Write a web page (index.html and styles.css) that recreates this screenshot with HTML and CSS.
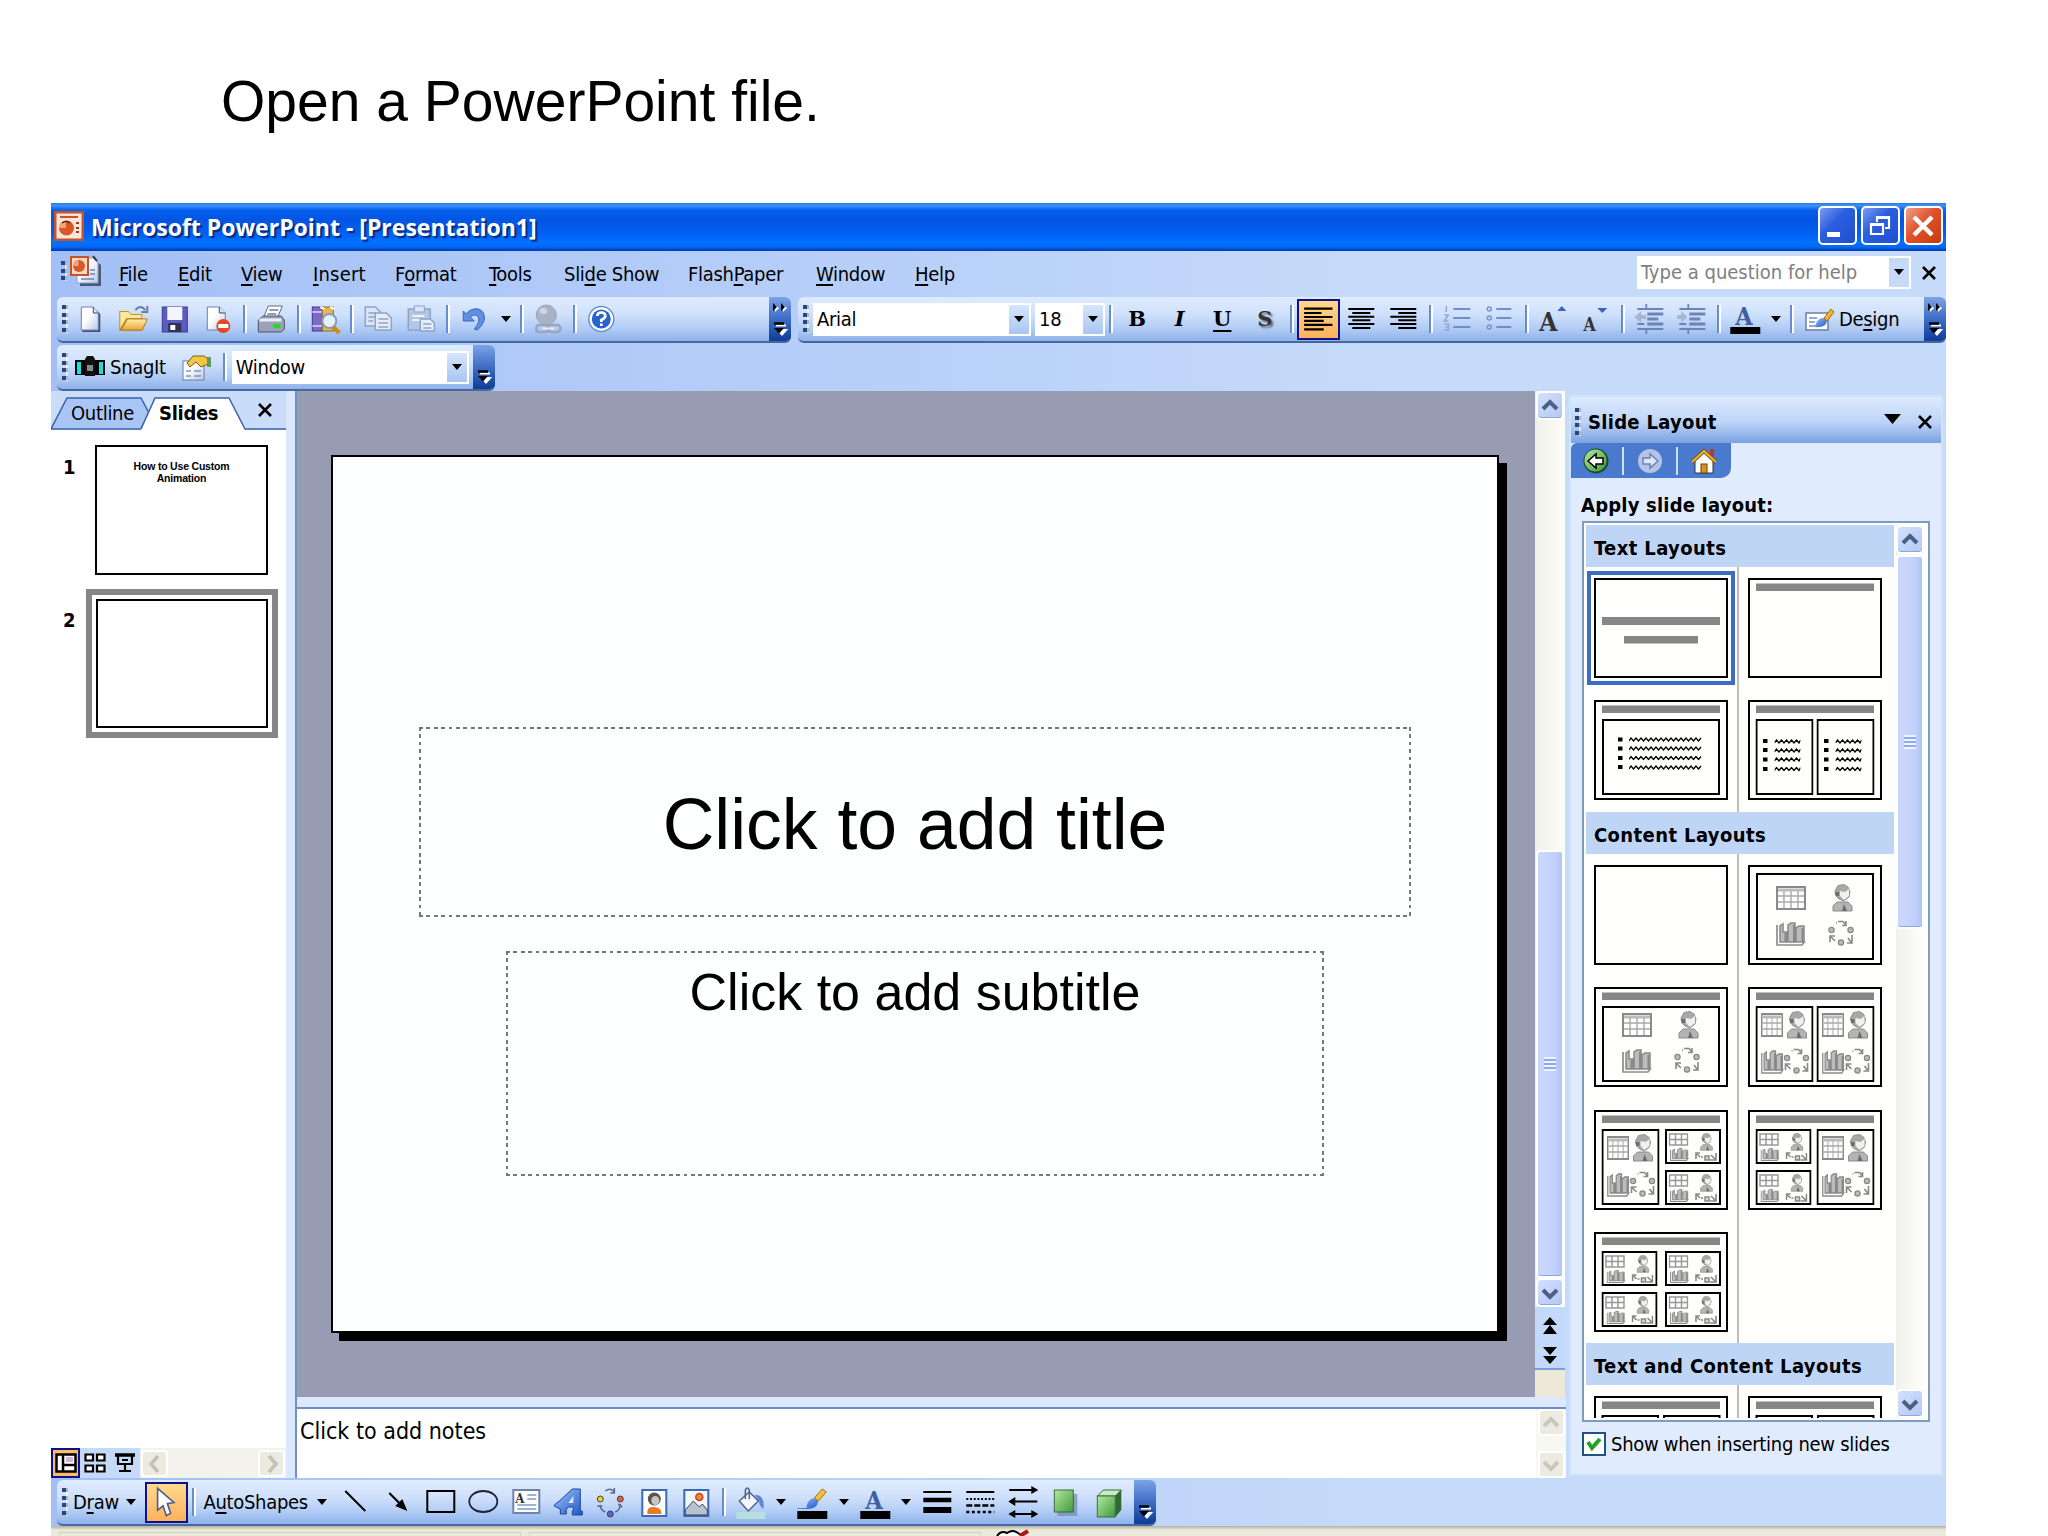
FILE: index.html
```html
<!DOCTYPE html>
<html lang="en">

<head>
    <meta charset="UTF-8">
    <title>Open a PowerPoint file</title>
    <link rel="stylesheet" href="styles.css">
</head>

<body>

<!-- Shared drawings -->
<svg class="defs" width="0" height="0">
    <defs>
        <linearGradient id="gGreen" x1="0" y1="0" x2="1" y2="1"><stop offset="0" stop-color="#b5e8a0"/><stop offset="1" stop-color="#3f9a3c"/></linearGradient>
        <linearGradient id="gBlue" x1="0" y1="0" x2="1" y2="1"><stop offset="0" stop-color="#9cc6fb"/><stop offset="1" stop-color="#1e55c8"/></linearGradient>
        <linearGradient id="gPaper" x1="0" y1="0" x2="1" y2="1"><stop offset="0.4" stop-color="#fff"/><stop offset="1" stop-color="#b9c8e6"/></linearGradient>
        <linearGradient id="gGold" x1="0" y1="0" x2="0" y2="1"><stop offset="0" stop-color="#fff0a8"/><stop offset="1" stop-color="#e8a83a"/></linearGradient>

        <symbol id="table" viewBox="0 0 30 24" preserveAspectRatio="none">
            <rect x="1" y="1" width="28" height="22" fill="#fff" stroke="#8a8a8a" stroke-width="2"/>
            <path d="M2 4H28" stroke="#bbb" stroke-width="3"/>
            <path d="M2 10H28M2 16H28M8 5V22M15 5V22M22 5V22" stroke="#a9a9a9" stroke-width="1.4"/>
        </symbol>
        <symbol id="miniTable" viewBox="0 0 20 13" preserveAspectRatio="none">
            <path d="M1 1H19V12H1ZM1 6.500H19M7 1V12M13 1V12" fill="#fff" stroke="#999" stroke-width="1.500"/>
        </symbol>
        <symbol id="person" viewBox="0 0 21 28" preserveAspectRatio="none">
            <path d="M1 27V22L5 18H16L20 22V27Z" fill="#b4b4b4" stroke="#8c8c8c"/>
            <path d="M12 20L15 27H10Z" fill="#6c6c6c"/>
            <path d="M3 7L6 1.500L12 0.500L16 3L18 8L17 13L12 17L7 15L4 12Z" fill="#a8a8a8" stroke="#909090"/>
            <path d="M8 7L13 8L17 5L17 12L12 16L8 12Z" fill="#f0f0f0"/>
            <path d="M3 8H7V12H4Z" fill="#6c6c6c"/>
        </symbol>
        <symbol id="chart" viewBox="0 0 30 24" preserveAspectRatio="none">
            <path d="M1 3V23H26L29 19" fill="none" stroke="#8c8c8c" stroke-width="1.700"/>
            <path d="M4 20V4L7 2V10H11V20ZM12 20V3L15 1H19V20ZM20 20V6L23 4H28V20Z" fill="#bcbcbc" stroke="#888" stroke-width="1.500"/>
            <path d="M9.500 11V20M18 3V20M26.500 6V20" stroke="#888" stroke-width="2"/>
        </symbol>
        <symbol id="cycle" viewBox="0 0 26 26">
            <path d="M8 3H9M10 1.500H15L18 5M18 1V5.500H14M2 22V16H7M3 17L7 21M24 15V23H19M23 22L20 18" fill="none" stroke="#888" stroke-width="1.600"/>
            <circle cx="3.500" cy="10" r="2.600" fill="#bbb" stroke="#888" stroke-width="1.300"/>
            <circle cx="22.500" cy="10" r="2.600" fill="#bbb" stroke="#888" stroke-width="1.300"/>
            <circle cx="13" cy="22.500" r="2.600" fill="#bbb" stroke="#888" stroke-width="1.300"/>
        </symbol>
        <symbol id="miniCycle" viewBox="0 0 22 9">
            <path d="M1 7V1H5M2 2L5 5M6 5H8M21 1V8H15M20 7L16 3" fill="none" stroke="#888" stroke-width="1.600"/>
            <rect x="10" y="4" width="4" height="4" fill="#ddd" stroke="#888" stroke-width="1.500"/>
        </symbol>

        <!-- Building blocks of the layout previews -->
        <symbol id="frame" viewBox="0 0 134 100">
            <rect x="1" y="1" width="132" height="98" fill="#fefffc" stroke="#000" stroke-width="2"/>
        </symbol>
        <symbol id="titled" viewBox="0 0 134 100">
            <use href="#frame"/><rect x="8" y="5.500" width="118" height="7.500" fill="#868686"/>
        </symbol>
        <symbol id="half" viewBox="0 0 58 76">
            <rect x="1" y="1" width="56" height="74" fill="#fefffc" stroke="#000" stroke-width="2"/>
            <use href="#table" x="5.500" y="7" width="22" height="24"/>
            <use href="#person" x="31" y="5" width="21" height="28"/>
            <use href="#chart" x="5.500" y="44" width="23" height="24"/>
            <use href="#cycle" x="28" y="42" width="26" height="26"/>
        </symbol>
        <symbol id="mini" viewBox="0 0 56 35">
            <rect x="1" y="1" width="54" height="33" fill="#fefffc" stroke="#000" stroke-width="2"/>
            <use href="#miniTable" x="3.500" y="4" width="20" height="13"/>
            <use href="#person" x="35" y="4" width="13" height="18"/>
            <use href="#chart" x="5" y="19" width="19" height="13"/>
            <use href="#miniCycle" x="30" y="23" width="22" height="9"/>
        </symbol>
        <symbol id="four" viewBox="0 0 78 64">
            <use href="#table" x="0" y="2" width="30" height="24"/>
            <use href="#person" x="56" y="0" width="21" height="28"/>
            <use href="#chart" x="0" y="38" width="30" height="24"/>
            <use href="#cycle" x="52" y="36" width="26" height="26"/>
        </symbol>
        <symbol id="wave" viewBox="0 0 74 5">
            <path d="M0 4L2 1L4.500 4L7 1L9.500 4L12 1L14.500 4L17 1L19.500 4L22 1L24.500 4L27 1L29.500 4L32 1L34.500 4L37 1L39.500 4L42 1L44.500 4L47 1L49.500 4L52 1L54.500 4L57 1L59.500 4L62 1L64.500 4L67 1L69.500 4L72 1" fill="none" stroke="#000" stroke-width="1.300"/>
        </symbol>
        <symbol id="waveShort" viewBox="0 0 26 5">
            <path d="M0 4L2 1L4.500 4L7 1L9.500 4L12 1L14.500 4L17 1L19.500 4L22 1L24.500 4L26 1" fill="none" stroke="#000" stroke-width="1.300"/>
        </symbol>
        <symbol id="bulletHalf" viewBox="0 0 58 76">
            <rect x="1" y="1" width="56" height="74" fill="#fefffc" stroke="#000" stroke-width="2"/>
            <path d="M7.500 22H12M7.500 31H12M7.500 40.500H12M7.500 50H12" stroke="#000" stroke-width="4"/>
            <use href="#waveShort" x="19" y="20" width="26" height="5"/><use href="#waveShort" x="19" y="29" width="26" height="5"/>
            <use href="#waveShort" x="19" y="38" width="26" height="5"/><use href="#waveShort" x="19" y="47.500" width="26" height="5"/>
        </symbol>

        <symbol id="up" viewBox="0 0 24 26"><path d="M5 16L12 9L19 16" fill="none" stroke="#4d6185" stroke-width="4"/></symbol>
        <symbol id="down" viewBox="0 0 24 26"><path d="M5 10L12 17L19 10" fill="none" stroke="#4d6185" stroke-width="4"/></symbol>
        <symbol id="cross" viewBox="0 0 16 16"><path d="M2 2L14 14M14 2L2 14" stroke="#000" stroke-width="2.600"/></symbol>
        <symbol id="arrow" viewBox="0 0 10 6"><path d="M0 0H10L5 6Z"/></symbol>
        <symbol id="more" viewBox="0 0 18 14">
            <path d="M5 3.500H15M7 8H15L11 12.500Z" stroke="#fff" stroke-width="2" fill="#fff"/>
            <path d="M3 1.500H13" stroke="#000" stroke-width="2.500"/><path d="M3 6H13L8 11.500Z"/>
        </symbol>
        <symbol id="more2" viewBox="0 0 18 10">
            <path d="M4 2L8 5L4 9ZM12 2L16 5L12 9Z" fill="#fff"/><path d="M2 0L6 4L2 8ZM10 0L14 4L10 8Z"/>
        </symbol>
        <symbol id="ppt" viewBox="0 0 30 30">
            <rect x="1" y="1" width="28" height="28" fill="#fde6d8" stroke="#c4532a" stroke-width="3"/>
            <path d="M6 6H24" stroke="#c4532a" stroke-width="2"/>
            <circle cx="12.500" cy="17" r="7.500" fill="#d8582a"/><path d="M12 17V9.500A7.500 7.500 0 0 0 5 17Z" fill="#f4a379"/>
            <path d="M8 12Q12 9 16 12" stroke="#5a2410" stroke-width="1.500" fill="none"/>
            <path d="M22 12H25M22 17H25M22 21H25" stroke="#a03c18" stroke-width="2"/>
        </symbol>
    </defs>
</svg>

<h1 class="caption">Open a PowerPoint file.</h1>

<main class="app">

    <header class="titlebar">
        <svg class="app-icon" width="30" height="30"><use href="#ppt"/></svg>
        <span class="title-text">Microsoft PowerPoint - [Presentation1]</span>
        <div class="win-buttons">
            <div class="win-btn"><svg width="36" height="36"><rect x="7" y="24" width="13" height="5" fill="#fff"/></svg></div>
            <div class="win-btn"><svg width="36" height="36"><path d="M14 14V9H26V20H22M13 10H26" fill="none" stroke="#fff" stroke-width="2.200"/><path d="M8 16H20V26H8ZM8 17H20" fill="none" stroke="#fff" stroke-width="2.200"/></svg></div>
            <div class="win-btn close"><svg width="36" height="36"><path d="M8 9L26 27M26 9L8 27" stroke="#fff" stroke-width="4.500"/></svg></div>
        </div>
    </header>

    <nav class="menubar">
        <span class="grip short"></span>
        <svg class="doc-icon" width="32" height="32">
            <path d="M10 6H26L31 10V31H10Z" fill="#4a5a78"/><path d="M7 3H23L28 8V28H7Z" fill="url(#gPaper)" stroke="#8aa0c8"/>
            <path d="M20 15H25M20 19H25M11 24H24" stroke="#6a86c0" stroke-width="1.500"/><path d="M23 1L27 6" stroke="#334" stroke-width="2"/>
            <rect x="1" y="2" width="17" height="18" fill="#fbd9c6" stroke="#c4532a" stroke-width="2"/>
            <circle cx="9" cy="11" r="6" fill="#d8582a"/><path d="M8.500 11V5A6 6 0 0 0 3 11Z" fill="#f4a379"/>
        </svg>
        <span class="menu m-file"><u>F</u>ile</span>
        <span class="menu m-edit"><u>E</u>dit</span>
        <span class="menu m-view"><u>V</u>iew</span>
        <span class="menu m-insert"><u>I</u>nsert</span>
        <span class="menu m-format">F<u>o</u>rmat</span>
        <span class="menu m-tools"><u>T</u>ools</span>
        <span class="menu m-show">Sli<u>d</u>e Show</span>
        <span class="menu m-flash">Flash<u>P</u>aper</span>
        <span class="menu m-window"><u>W</u>indow</span>
        <span class="menu"><u>H</u>elp</span>
        <div class="combo ask"><span>Type a question for help</span><i class="drop"><svg width="10" height="6"><use href="#arrow"/></svg></i></div>
        <svg class="menu-close" width="16" height="16"><use href="#cross"/></svg>
    </nav>

    <div class="toolbar-row">
        <!-- Standard toolbar -->
        <div class="toolbar standard">
            <span class="grip"></span>
            <svg class="icon" viewBox="0 0 34 34"><path d="M9 6H21L27 12V30H9Z" fill="#45557a"/><path d="M8 5H20L25 11V28H8Z" fill="url(#gPaper)" stroke="#6c82ad"/><path d="M20 5V11H25" fill="#dce6f8" stroke="#334a70"/></svg>
            <svg class="icon" viewBox="0 0 34 34"><path d="M3 29V9H12L15 12H26V17H31L26 29Z" fill="#c88d25"/><path d="M4 26V10H12L15 13H25V16H10Z" fill="#fbe9a0"/><path d="M5 28L11 17H31L26 28Z" fill="url(#gGold)" stroke="#b9812a"/><path d="M19 8Q24 2 29 8M31 4V10H25" fill="none" stroke="#6b7f9c" stroke-width="2"/></svg>
            <svg class="icon" viewBox="0 0 34 34"><rect x="4" y="5" width="25" height="25" fill="#5d5cc0" stroke="#3b3b90"/><rect x="9" y="5" width="15" height="13" fill="#f4f6ff"/><rect x="10" y="21" width="13" height="9" fill="#2c3350"/><rect x="12" y="23" width="5" height="5" fill="#fff"/></svg>
            <svg class="icon" viewBox="0 0 34 34"><path d="M6 5H18L24 11V28H6Z" fill="url(#gPaper)" stroke="#6c82ad"/><path d="M18 5V11H24" fill="#dce6f8" stroke="#334a70"/><circle cx="22" cy="24" r="7" fill="#e04a26"/><rect x="17" y="22" width="10" height="4" fill="#fff"/></svg>
            <i class="sep"></i>
            <svg class="icon" viewBox="0 0 34 34"><path d="M9 16L14 4H28L23 16Z" fill="#fff" stroke="#5c6a86"/><path d="M15 8H24M13 12H22" stroke="#6d7c99" stroke-width="1.500"/><path d="M4 18L9 14H27L30 18V27L27 30H4Z" fill="#9aa3b5" stroke="#49546c"/><path d="M5 18H27" stroke="#eef" stroke-width="3"/><rect x="19" y="22" width="7" height="4" fill="#1fe01f"/></svg>
            <i class="sep"></i>
            <svg class="icon" viewBox="0 0 34 34"><rect x="4" y="5" width="10" height="24" fill="#7c6cc8" stroke="#43368c"/><path d="M4 10H14M4 24H14" stroke="#c9b8ff" stroke-width="2"/><rect x="14" y="5" width="11" height="24" fill="#e3b858" stroke="#8a6a20"/><path d="M12 5L16 7M22 5L26 7" stroke="#fff" stroke-width="2"/><circle cx="21" cy="19" r="7" fill="#e4f3fb" stroke="#8a9cb5" stroke-width="2"/><path d="M25 25L31 31" stroke="#c98c1c" stroke-width="4"/></svg>
            <i class="sep"></i>
            <svg class="icon" viewBox="0 0 34 34"><path d="M4 5H14L19 10V24H4Z" fill="#dbe5f6" stroke="#8fa4c8" stroke-width="1.500"/><path d="M7 11H14M7 15H14M7 19H12" stroke="#8fa4c8" stroke-width="1.500"/><path d="M14 11H25L30 16V28H14Z" fill="#e6edf9" stroke="#8fa4c8" stroke-width="1.500"/><path d="M17 17H27M17 21H27M17 25H27" stroke="#8fa4c8" stroke-width="1.500"/></svg>
            <svg class="icon" viewBox="0 0 34 34"><rect x="4" y="7" width="22" height="21" fill="#b4c6e4" stroke="#8ea3c8" stroke-width="1.500"/><rect x="10" y="4" width="10" height="6" fill="#dbe5f6" stroke="#8ea3c8"/><path d="M8 14H20M8 18H16" stroke="#edf3fc" stroke-width="2"/><path d="M16 17H26L30 21V29H16Z" fill="#e6edf9" stroke="#8ea3c8" stroke-width="1.500"/><path d="M19 22H27M19 26H27" stroke="#8ea3c8" stroke-width="1.500"/></svg>
            <i class="sep"></i>
            <svg class="icon" viewBox="0 0 34 34"><path d="M9 12Q13 6 21 7Q28 9 27 18Q25 24 20 28L17 27Q23 20 21 15Q18 11 13 15L17 19H6V9Z" fill="#5f8fe0" stroke="#3c66ba"/></svg>
            <i class="dd"><svg width="10" height="6"><use href="#arrow"/></svg></i>
            <i class="sep"></i>
            <svg class="icon" viewBox="0 0 34 34"><circle cx="16" cy="13" r="10" fill="#a9b3c6" stroke="#98a3b9"/><ellipse cx="13" cy="9" rx="4" ry="3" fill="#cdd5e2"/><rect x="6" y="23" width="12" height="7" rx="3" fill="none" stroke="#9aa6bb" stroke-width="2.500"/><rect x="18" y="23" width="12" height="7" rx="3" fill="none" stroke="#9aa6bb" stroke-width="2.500"/><path d="M12 26.500H24" stroke="#e8ecf4" stroke-width="2"/></svg>
            <i class="sep"></i>
            <svg class="icon" viewBox="0 0 34 34"><circle cx="17" cy="17" r="12.500" fill="#fff" stroke="#6d93cc" stroke-width="1.500"/><circle cx="17" cy="17" r="9.500" fill="#2763cf"/><path d="M13 14Q13 10.500 17 10.500T21 14Q21 16 17 18V20M17 21.500V24" fill="none" stroke="#fff" stroke-width="2.700"/></svg>
            <span class="chevron"><svg width="18" height="10"><use href="#more2"/></svg><svg width="18" height="14"><use href="#more"/></svg></span>
        </div>

        <!-- Formatting toolbar -->
        <div class="toolbar formatting">
            <span class="grip"></span>
            <div class="combo font"><span>Arial</span><i class="drop"><svg width="10" height="6"><use href="#arrow"/></svg></i></div>
            <div class="combo size"><span>18</span><i class="drop"><svg width="10" height="6"><use href="#arrow"/></svg></i></div>
            <i class="sep"></i>
            <b class="icon glyph">B</b>
            <b class="icon glyph italic">I</b>
            <b class="icon glyph underline">U</b>
            <b class="icon glyph shadow">S</b>
            <i class="sep"></i>
            <svg class="icon on" viewBox="0 0 34 34"><path d="M4 7H30M4 11H20M4 14.700H30M4 18.300H22M4 22H30M4 26H22" stroke="#000" stroke-width="2"/></svg>
            <svg class="icon" viewBox="0 0 34 34"><path d="M4 7H30M8 11H26M4 14.700H30M8 18.300H26M4 22H30M8 26H26" stroke="#000" stroke-width="2"/></svg>
            <svg class="icon" viewBox="0 0 34 34"><path d="M4 7H30M12 11H30M4 14.700H30M12 18.300H30M4 22H30M12 26H30" stroke="#000" stroke-width="2"/></svg>
            <i class="sep"></i>
            <svg class="icon" viewBox="0 0 34 34"><path d="M13 7H30M13 16H30M13 25H30" stroke="#6f8fc8" stroke-width="2"/><path d="M6 4V10M4 13H8L4 19H8M4 22H8V28H4M5 25H8" fill="none" stroke="#93a8cf" stroke-width="1.500"/></svg>
            <svg class="icon" viewBox="0 0 34 34"><path d="M14 7H29M14 16H29M14 25H29" stroke="#6f8fc8" stroke-width="2"/><circle cx="7" cy="7" r="2" fill="none" stroke="#7d95c2" stroke-width="1.500"/><circle cx="7" cy="16" r="2" fill="none" stroke="#7d95c2" stroke-width="1.500"/><circle cx="7" cy="25" r="2" fill="none" stroke="#7d95c2" stroke-width="1.500"/></svg>
            <i class="sep"></i>
            <svg class="icon" viewBox="0 0 34 34"><text x="3" y="29" class="svg-letter big">A</text><path d="M21 9L25.500 4L30 9Z" fill="#3d64b4"/></svg>
            <svg class="icon" viewBox="0 0 34 34"><text x="5" y="29" class="svg-letter small">A</text><path d="M19 6H29L24 11Z" fill="#3d64b4"/></svg>
            <i class="sep"></i>
            <svg class="icon" viewBox="0 0 34 34"><path d="M5 7H31M5 27H31M14 2V6M14 28V32M5 22H12" stroke="#6d85b4" stroke-width="1.800"/><path d="M15 12H31M15 17H26M15 22H31" stroke="#6d85b4" stroke-width="2.800"/><path d="M2 15L9 9V13H14V17H9V21Z" fill="#a6b6d2"/></svg>
            <svg class="icon" viewBox="0 0 34 34"><path d="M5 7H31M5 27H31M14 2V6M14 28V32M5 22H12" stroke="#6d85b4" stroke-width="1.800"/><path d="M15 12H31M15 17H26M15 22H31" stroke="#6d85b4" stroke-width="2.800"/><path d="M13 15L7 9V13H3V17H7V21Z" fill="#a6b6d2"/></svg>
            <i class="sep"></i>
            <svg class="icon" viewBox="0 0 34 34"><text x="7" y="23" class="svg-letter blue">A</text><rect x="2" y="25" width="30" height="7"/></svg>
            <i class="dd"><svg width="10" height="6"><use href="#arrow"/></svg></i>
            <i class="sep"></i>
            <svg class="design-icon" width="32" height="28"><rect x="1" y="8" width="22" height="17" fill="#fff" stroke="#6a7da5" stroke-width="1.500"/><path d="M4 13H12M4 17H10M4 21H14" stroke="#93a9d8" stroke-width="2"/><path d="M10 22Q12 12 19 13L22 16Q21 23 10 22Z" fill="url(#gBlue)"/><path d="M19 13L26 4L29 7L22 16Z" fill="#f4b62c" stroke="#a56a14"/></svg>
            <span class="design-label">De<u>s</u>ign</span>
            <span class="chevron"><svg width="18" height="10"><use href="#more2"/></svg><svg width="18" height="14"><use href="#more"/></svg></span>
        </div>
    </div>

    <div class="toolbar-row second-row">
        <div class="toolbar snagit">
            <span class="grip"></span>
            <svg class="snag-icon" width="30" height="22"><rect x="0" y="4" width="30" height="15" fill="#000"/><rect x="2" y="6" width="4" height="12" fill="#18e0e0"/><rect x="24" y="6" width="4" height="12" fill="#18e0e0"/><path d="M10 3L12 0H18L20 3V20H10Z" fill="#111"/><rect x="12" y="9" width="6" height="6" fill="#888"/></svg>
            <span class="snag-label">SnagIt</span>
            <svg class="prop-icon" width="30" height="28"><rect x="1" y="8" width="21" height="19" fill="url(#gPaper)" stroke="#6a7da5"/><path d="M4 18H9M12 18H19M4 23H9M12 23H19" stroke="#7d95c2" stroke-width="1.500"/><path d="M5 10L11 3H22L26 6V11L19 14L14 9L8 14Z" fill="#f3c744" stroke="#7d5c14"/><rect x="25" y="4" width="4" height="10" fill="#5a9a5a"/></svg>
            <i class="sep"></i>
            <div class="combo profile"><span>Window</span><i class="drop"><svg width="10" height="6"><use href="#arrow"/></svg></i></div>
            <span class="chevron"><svg width="18" height="14"><use href="#more"/></svg></span>
        </div>
    </div>

    <section class="workspace">

        <!-- Outline / Slides pane -->
        <aside class="left-pane">
            <div class="tabs">
                <svg class="tab-shapes" width="235" height="40">
                    <path d="M0 38L16 7H90L98 22L90 38Z" fill="#a9c5f6" stroke="#3b62a8" stroke-width="1.500"/>
                    <path d="M90 38L104 7H178L194 38V40H90Z" fill="#fff"/><path d="M90 38L104 7H178L194 38H235" fill="none" stroke="#3b62a8" stroke-width="1.500"/>
                    <rect x="0" y="39" width="235" height="1" fill="#fff"/>
                </svg>
                <span class="tab-outline">Outline</span>
                <span class="tab-slides">Slides</span>
                <svg class="tab-close" width="16" height="16"><use href="#cross"/></svg>
            </div>
            <div class="thumb-row">
                <b>1</b>
                <div class="thumb"><p>How to Use Custom<br>Animation</p></div>
            </div>
            <div class="thumb-row second">
                <b>2</b>
                <div class="thumb-selected"><div class="thumb"></div></div>
            </div>
            <div class="view-bar">
                <span class="view on"><svg width="22" height="20"><path d="M1.500 1.500H20.500V18.500H1.500ZM8 1V19M8 12H20" fill="#fff" stroke="#000" stroke-width="2.500"/><rect x="11" y="4" width="7" height="5" fill="#cbb8dc"/></svg></span>
                <span class="view"><svg width="22" height="20"><path d="M1.500 1.500H9V7.500H1.500ZM13 1.500H20.500V7.500H13ZM1.500 12.500H9V18.500H1.500ZM13 12.500H20.500V18.500H13Z" fill="#fff" stroke="#000" stroke-width="2.200"/></svg></span>
                <span class="view"><svg width="22" height="20"><path d="M1 2H21" stroke="#000" stroke-width="3.500"/><path d="M4 3V11H18V3M8 7H14M11 12V18M5 18H17" fill="none" stroke="#000" stroke-width="2.200"/></svg></span>
                <div class="hscroll">
                    <span class="dis-btn"><svg width="24" height="26"><path d="M15 5L8 13L15 21" fill="none" stroke="#c2c1b4" stroke-width="3.500"/></svg></span>
                    <span class="dis-btn"><svg width="24" height="26"><path d="M9 5L16 13L9 21" fill="none" stroke="#c2c1b4" stroke-width="3.500"/></svg></span>
                </div>
            </div>
        </aside>

        <!-- Slide and notes -->
        <div class="center">
            <div class="stage">
                <div class="canvas">
                    <div class="slide">
                        <div class="placeholder ph-title">Click to add title</div>
                        <div class="placeholder ph-sub">Click to add subtitle</div>
                    </div>
                </div>
                <div class="vscroll">
                    <span class="sb-btn"><svg width="24" height="26"><use href="#up"/></svg></span>
                    <span class="sb-space"></span>
                    <span class="sb-thumb"><i></i></span>
                    <span class="sb-btn"><svg width="24" height="26"><use href="#down"/></svg></span>
                    <span class="jump">
                        <svg width="16" height="48"><path d="M8 0L15 8H1ZM8 8L15 17H1ZM1 30H15L8 38ZM1 39H15L8 47Z"/></svg>
                    </span>
                    <span class="corner"></span>
                </div>
            </div>
            <div class="notes">
                <span class="notes-text">Click to add notes</span>
                <div class="notes-scroll">
                    <span class="dis-btn"><svg width="24" height="26"><path d="M5 16L12 9L19 16" fill="none" stroke="#c9c8ba" stroke-width="4"/></svg></span>
                    <span class="dis-btn"><svg width="24" height="26"><path d="M5 10L12 17L19 10" fill="none" stroke="#c9c8ba" stroke-width="4"/></svg></span>
                </div>
            </div>
        </div>

        <!-- Task pane -->
        <aside class="task-pane">
            <div class="task-head">
                <span class="grip"></span>
                <b>Slide Layout</b>
                <svg class="task-drop" width="17" height="10"><path d="M0 0H17L8.500 10Z"/></svg>
                <svg width="16" height="16"><use href="#cross"/></svg>
            </div>
            <div class="task-nav">
                <svg width="26" height="26"><circle cx="13" cy="13" r="12.500" fill="#1c4a2a"/><circle cx="12.500" cy="12.500" r="11" fill="url(#gGreen)"/><path d="M5 13L13 6V10H20V16H13V20Z" fill="#fff" stroke="#000" stroke-width="1.500"/></svg>
                <i></i>
                <svg width="26" height="26"><circle cx="13" cy="13" r="12" fill="#b5c3e4"/><path d="M21 13L13 6V10H6V16H13V20Z" fill="#dfe6f6" stroke="#6882ba" stroke-width="1.500"/></svg>
                <i></i>
                <svg width="26" height="26"><rect x="19" y="1" width="4" height="10" fill="#b5382a"/><path d="M4 13L13 4L22 13V25H4Z" fill="#fff" stroke="#333"/><path d="M1 14L13 3L25 14" fill="none" stroke="#7d5710" stroke-width="4"/><path d="M1 14L13 3L25 14" fill="none" stroke="#f2b43a" stroke-width="2"/><rect x="10" y="16" width="6" height="9" fill="#d98f1a" stroke="#6a430a"/></svg>
            </div>
            <b class="task-label">Apply slide layout:</b>
            <div class="layout-box">
                <div class="layout-list">
                    <h2>Text Layouts</h2>
                    <div class="grid two-rows">
                        <svg class="card selected" viewBox="0 0 134 100"><use href="#frame"/><rect x="8" y="39" width="118" height="8" fill="#868686"/><rect x="30" y="58" width="74" height="7.500" fill="#868686"/></svg>
                        <svg class="card" viewBox="0 0 134 100"><use href="#titled"/></svg>
                        <svg class="card" viewBox="0 0 134 100"><use href="#titled"/><rect x="9" y="20" width="116" height="74" fill="none" stroke="#000" stroke-width="2"/>
                            <path d="M24 39.500H28.500M24 48.500H28.500M24 58H28.500M24 67H28.500" stroke="#000" stroke-width="4"/>
                            <use href="#wave" x="35" y="37" width="74" height="5"/><use href="#wave" x="35" y="46" width="74" height="5"/><use href="#wave" x="35" y="55.500" width="74" height="5"/><use href="#wave" x="35" y="65" width="74" height="5"/></svg>
                        <svg class="card" viewBox="0 0 134 100"><use href="#titled"/><use href="#bulletHalf" x="7.500" y="19" width="58" height="76"/><use href="#bulletHalf" x="68.500" y="19" width="58" height="76"/></svg>
                    </div>
                    <h2>Content Layouts</h2>
                    <div class="grid four-rows">
                        <svg class="card" viewBox="0 0 134 100"><use href="#frame"/></svg>
                        <svg class="card" viewBox="0 0 134 100"><use href="#frame"/><rect x="9" y="9" width="116" height="85" fill="none" stroke="#000" stroke-width="2"/><use href="#four" x="28" y="19" width="78" height="64"/></svg>
                        <svg class="card" viewBox="0 0 134 100"><use href="#titled"/><rect x="9" y="20" width="116" height="74" fill="none" stroke="#000" stroke-width="2"/><use href="#four" x="28" y="24" width="78" height="64"/></svg>
                        <svg class="card" viewBox="0 0 134 100"><use href="#titled"/><use href="#half" x="7.500" y="19" width="58" height="76"/><use href="#half" x="68.500" y="19" width="58" height="76"/></svg>
                        <svg class="card" viewBox="0 0 134 100"><use href="#titled"/><use href="#half" x="7.500" y="19" width="58" height="76"/><use href="#mini" x="71" y="19" width="56" height="35"/><use href="#mini" x="71" y="60" width="56" height="35"/></svg>
                        <svg class="card" viewBox="0 0 134 100"><use href="#titled"/><use href="#mini" x="7.500" y="19" width="56" height="35"/><use href="#mini" x="7.500" y="60" width="56" height="35"/><use href="#half" x="68.500" y="19" width="58" height="76"/></svg>
                        <svg class="card" viewBox="0 0 134 100"><use href="#titled"/><use href="#mini" x="7.500" y="19" width="56" height="35"/><use href="#mini" x="7.500" y="60" width="56" height="35"/><use href="#mini" x="71" y="19" width="56" height="35"/><use href="#mini" x="71" y="60" width="56" height="35"/></svg>
                    </div>
                    <h2>Text and Content Layouts</h2>
                    <div class="grid last">
                        <svg class="card" viewBox="0 0 134 100"><use href="#titled"/><path d="M8.500 94V20H64V94M70 94V20H125.500V94" fill="none" stroke="#000" stroke-width="2"/></svg>
                        <svg class="card" viewBox="0 0 134 100"><use href="#titled"/><path d="M8.500 94V20H64V94M70 94V20H125.500V94" fill="none" stroke="#000" stroke-width="2"/></svg>
                    </div>
                </div>
                <div class="list-scroll">
                    <span class="sb-btn"><svg width="24" height="26"><use href="#up"/></svg></span>
                    <span class="sb-thumb"><i></i></span>
                    <span class="sb-space"></span>
                    <span class="sb-btn"><svg width="24" height="26"><use href="#down"/></svg></span>
                </div>
            </div>
            <div class="check-row">
                <span class="checkbox"><svg width="20" height="20"><path d="M4 8L8 14L16 5" fill="none" stroke="#21a121" stroke-width="4"/></svg></span>
                <span class="check-label">Show when inserting new slides</span>
            </div>
        </aside>
    </section>

    <!-- Drawing toolbar -->
    <div class="draw-row">
        <div class="toolbar drawing">
            <span class="grip"></span>
            <span class="draw-label">D<u>r</u>aw</span>
            <i class="dd draw-dd"><svg width="10" height="6"><use href="#arrow"/></svg></i>
            <svg class="icon on" viewBox="0 0 34 34"><path d="M9 4V24L14 20L17 29L21 27L18 18L24 17Z" fill="#fff" stroke="#4a5f8c" stroke-width="1.500"/></svg>
            <i class="sep"></i>
            <span class="auto-label">A<u>u</u>toShapes</span>
            <i class="dd auto-dd"><svg width="10" height="6"><use href="#arrow"/></svg></i>
            <svg class="icon" viewBox="0 0 34 34"><path d="M7 6L27 26" stroke="#000" stroke-width="2"/></svg>
            <svg class="icon" viewBox="0 0 34 34"><path d="M8 8L20 20" stroke="#000" stroke-width="2"/><path d="M26 26L21 14L14 21Z"/></svg>
            <svg class="icon" viewBox="0 0 34 34"><rect x="3" y="6" width="27" height="21" fill="none" stroke="#000" stroke-width="2"/></svg>
            <svg class="icon" viewBox="0 0 34 34"><ellipse cx="17" cy="16.500" rx="14" ry="10.500" fill="none" stroke="#223" stroke-width="1.800"/></svg>
            <svg class="icon" viewBox="0 0 34 34"><rect x="4" y="5" width="26" height="23" fill="#fff" stroke="#6d84ae" stroke-width="2"/><text x="6" y="18" class="svg-letter tiny">A</text><path d="M18 10H27M18 14H27M8 20H27M8 24H27" stroke="#7f9acb" stroke-width="1.500"/></svg>
            <svg class="icon" viewBox="0 0 34 34"><path d="M3 20L8 16L21 4H29V26H31V30H21V26H22V22H17L14 26H15V29H9V24L3 21Z" fill="url(#gBlue)" stroke="#1c479c"/><path d="M17 18H22V11Z" fill="#dceafd"/></svg>
            <svg class="icon" viewBox="0 0 34 34"><path d="M11 6Q16 2 20 7M6 20Q6 25 11 27M26 19Q26 25 21 27M20 3V8H16M3 21H8M28 22L24 19" fill="none" stroke="#5a6b8c" stroke-width="1.600"/><circle cx="6" cy="14" r="3" fill="#f0c835" stroke="#444"/><circle cx="26" cy="14" r="3" fill="#e35d40" stroke="#444"/><circle cx="16" cy="29" r="3" fill="#5a62d8" stroke="#444"/></svg>
            <svg class="icon" viewBox="0 0 34 34"><rect x="5" y="5" width="24" height="26" fill="#fff" stroke="#3f68b5" stroke-width="2"/><circle cx="17" cy="14" r="6.500" fill="#555"/><ellipse cx="18" cy="15.500" rx="4" ry="4.500" fill="#c8c4c0"/><path d="M10 29Q9 21 17 22T24 29Z" fill="#ec7a22"/></svg>
            <svg class="icon" viewBox="0 0 34 34"><rect x="5" y="5" width="24" height="26" fill="#f2f6fd" stroke="#3f68b5" stroke-width="2"/><path d="M6 25L14 16L20 22L23 19L28 25V30H6Z" fill="#b9c0cf" stroke="#39445a"/><circle cx="20" cy="12" r="3.500" fill="#f08a2c" stroke="#c8452a" stroke-width="1.500"/></svg>
            <i class="sep"></i>
            <svg class="icon" viewBox="0 0 34 34"><path d="M6 16L16 7L25 16L15 26Z" fill="#f4f7fd" stroke="#52648a" stroke-width="1.500"/><path d="M12 14V5Q14 1 16 5V14" fill="none" stroke="#52648a" stroke-width="1.500"/><path d="M21 10Q32 9 30 24Q25 20 26 16Z" fill="#5f86d2"/><rect x="3" y="27" width="29" height="7" fill="#b7dfe0"/></svg>
            <i class="dd"><svg width="10" height="6"><use href="#arrow"/></svg></i>
            <svg class="icon" viewBox="0 0 34 34"><path d="M2 23H11Q12 14 19 13L23 16Q22 24 12 24H2Z" fill="url(#gBlue)"/><path d="M19 13L27 4L31 7L23 16Z" fill="#f4c23a" stroke="#a56a14"/><rect x="2" y="26" width="30" height="8"/></svg>
            <i class="dd"><svg width="10" height="6"><use href="#arrow"/></svg></i>
            <svg class="icon" viewBox="0 0 34 34"><text x="7" y="24" class="svg-letter blue">A</text><rect x="2" y="26" width="30" height="8"/></svg>
            <i class="dd"><svg width="10" height="6"><use href="#arrow"/></svg></i>
            <svg class="icon" viewBox="0 0 34 34"><path d="M3 7H31" stroke="#000" stroke-width="2"/><path d="M3 15H31" stroke="#000" stroke-width="4.500"/><path d="M3 25H31" stroke="#000" stroke-width="6"/></svg>
            <svg class="icon" viewBox="0 0 34 34"><path d="M3 7H31" stroke="#000" stroke-width="2"/><path d="M3 14H31" stroke="#000" stroke-width="2" stroke-dasharray="2 1.700"/><path d="M3 20.500H31" stroke="#000" stroke-width="2.500" stroke-dasharray="6 2"/><path d="M3 27H31" stroke="#000" stroke-width="2.500" stroke-dasharray="3 2.500"/></svg>
            <svg class="icon" viewBox="0 0 34 34"><path d="M3 5H28M6 16.500H31M6 29H28" stroke="#000" stroke-width="2.200"/><path d="M25 1L32 5L25 9ZM9 12L2 16.500L9 21ZM9 25L2 29L9 33ZM25 25L32 29L25 33Z"/></svg>
            <svg class="icon" viewBox="0 0 34 34"><rect x="9" y="9" width="20" height="22" fill="#7488ac" opacity="0.7"/><rect x="6" y="5" width="19" height="22" fill="url(#gGreen)" stroke="#3c6b3c"/></svg>
            <svg class="icon" viewBox="0 0 34 34"><path d="M6 11L12 5H30L24 11Z" fill="#c8ecc0" stroke="#3c6b3c"/><path d="M24 11L30 5V25L24 32Z" fill="#2f6a35"/><rect x="6" y="11" width="18" height="21" fill="url(#gGreen)" stroke="#3c6b3c"/></svg>
            <span class="chevron"><svg width="18" height="14"><use href="#more"/></svg></span>
        </div>
    </div>

    <footer class="statusbar">
        <span class="st-1"></span><span class="st-2"></span>
        <svg width="44" height="10"><path d="M4 10Q8 4 14 7Q20 3 25 7L29 10" fill="#fff" stroke="#000" stroke-width="2"/><path d="M27 10L35 5" stroke="#b01818" stroke-width="4"/></svg>
    </footer>
</main>

</body>

</html>
```
FILE: styles.css
```css
* {
    box-sizing: border-box;
}

body {
    margin: 0;
    width: 2048px;
    height: 1536px;
    overflow: hidden;
    background: #fff;
    color: #000;
    font-family: "DejaVu Sans Condensed", "DejaVu Sans", sans-serif;
    font-stretch: condensed;
    font-size: 20px;
    letter-spacing: -0.3px;
}

svg {
    display: block;
    flex: none;
}

.defs {
    position: absolute;
}

u {
    text-underline-offset: 3px;
    text-decoration-thickness: 2px;
    text-decoration-skip-ink: none;
}

.caption {
    margin: 0;
    height: 203px;
    padding-left: 221px;
    font: 57px/203px "Liberation Sans", Arial, sans-serif;
    letter-spacing: 0;
}

.app {
    width: 1895px;
    height: 1333px;
    margin-left: 51px;
    display: flex;
    flex-direction: column;
    overflow: hidden;
    background: linear-gradient(90deg, #a3bff5, #b8d0f9 45%, #c6daf9 70%);
}

/* Title bar */
.titlebar {
    height: 48px;
    flex: none;
    display: flex;
    align-items: center;
    padding: 0 3px;
    background: linear-gradient(#2a78e4 0, #3c92f8 5%, #0560ee 15%, #0355e2 35%, #0260f4 65%, #0272ff 80%, #0268f8 92%, #0140b8 98%);
}

.app-icon {
    margin-bottom: 3px;
}

.title-text {
    margin-left: 7px;
    color: #fff;
    font: bold 23px "Open Sans", "Noto Sans", sans-serif;
    text-shadow: 2px 2px 1px #0a2a80;
    letter-spacing: 0;
}

.win-buttons {
    display: flex;
    gap: 4px;
    margin: 0 0 3px auto;
}

.win-btn {
    width: 39px;
    height: 39px;
    border: 2px solid #fff;
    border-radius: 5px;
    background: linear-gradient(135deg, #7c9cf0, #2c5fe0 40%, #1d4fd0);
}

.win-btn.close {
    background: linear-gradient(135deg, #f0a088, #e0522c 45%, #c8390f);
}

/* Menu bar */
.menubar {
    height: 46px;
    flex: none;
    display: flex;
    align-items: center;
    padding-left: 10px;
}

.grip {
    width: 6px;
    height: 28px;
    flex: none;
    background: repeating-linear-gradient(#2c4578 0 4px, transparent 4px 7.600px);
    border-right: 2px solid rgba(255, 255, 255, 0.6);
}

.grip.short {
    height: 20px;
    margin-bottom: 6px;
}

.doc-icon {
    margin: -6px 0 0 3px;
}

.menu {
    width: 63px;
    flex: none;
    white-space: nowrap;
}

.m-file {
    width: 59px;
    margin-left: 17px;
}

.m-edit {
    width: 63px;
}

.m-view {
    width: 72px;
}

.m-insert {
    width: 82px;
    letter-spacing: 0.2px;
}

.m-format {
    width: 94px;
}

.m-tools {
    width: 75px;
}

.m-show {
    width: 124px;
}

.m-flash {
    width: 128px;
}

.m-window {
    width: 99px;
}

.combo {
    height: 33px;
    flex: none;
    display: flex;
    align-items: center;
    justify-content: space-between;
    padding: 2px 2px 2px 4px;
    background: #fff;
    white-space: nowrap;
}

.drop {
    width: 20px;
    height: 29px;
    display: flex;
    align-items: center;
    justify-content: center;
    background: linear-gradient(#d6e5fb, #a9c6f2);
}

.ask {
    width: 274px;
    margin: -4px 0 0 auto;
    color: #808080;
    letter-spacing: 0;
}

.ask .drop {
    background: #c6d9f6;
}

.menu-close {
    margin: -3px 9px 0 10px;
}

/* Toolbars */
.toolbar-row {
    height: 48px;
    flex: none;
    display: flex;
    gap: 7px;
    padding-left: 6px;
}

.second-row {
    height: 46px;
}

.toolbar {
    height: 46px;
    display: flex;
    align-items: center;
    padding-left: 5px;
    overflow: hidden;
    border-bottom: 2px solid #45689f;
    border-radius: 6px;
    background: linear-gradient(#dfecff, #cfe0fb 40%, #b3cdf6 70%, #8fb2ea);
}

.standard {
    width: 734px;
}

.formatting {
    width: 1148px;
}

.snagit {
    width: 438px;
}

.icon {
    width: 42.600px;
    height: 34px;
    flex: none;
}

.standard .grip + .icon {
    margin-left: 1px;
}

.icon.on {
    height: 41px;
    border: 2px solid #10108a;
    background: linear-gradient(#ffd98c, #fdb15c);
}

.sep {
    width: 10.800px;
    height: 28px;
    flex: none;
    background: linear-gradient(90deg, transparent 4px, #6a8ccb 4px 6px, #fff 6px 8px, transparent 8px);
}

.dd {
    width: 20px;
    flex: none;
    display: flex;
    justify-content: center;
}

.chevron {
    width: 22px;
    height: 46px;
    flex: none;
    display: flex;
    flex-direction: column;
    align-items: center;
    justify-content: flex-end;
    gap: 9px;
    padding-bottom: 6px;
    margin-left: auto;
    background: linear-gradient(#7ea6e8, #3f6cc4 50%, #0c3a94);
}

.font {
    width: 218px;
    margin: 0 4px 0 4px;
}

.size {
    width: 70px;
}

.glyph {
    font: bold 21px/34px "DejaVu Serif", "Liberation Serif", serif;
    text-align: center;
    letter-spacing: 0;
}

.italic {
    font-style: italic;
}

.underline {
    text-decoration: underline;
    text-decoration-thickness: 2px;
    text-underline-offset: 4px;
}

.shadow {
    color: #333;
    text-shadow: 2px 2px 2px #667;
}

.svg-letter {
    font-family: "DejaVu Serif", serif;
    font-weight: bold;
    letter-spacing: 0;
    fill: #333;
}

.big {
    font-size: 26px;
}

.small {
    font-size: 18px;
}

.tiny {
    font-size: 13px;
}

.blue {
    font-size: 25px;
    fill: #4060a4;
}

.design-icon {
    margin-left: 8px;
}

.design-label {
    margin-left: 2px;
}

.snag-icon {
    margin: 0 5px 0 7px;
}

.snag-label {
    width: 72px;
}

.prop-icon {
    margin-right: 7px;
}

.profile {
    width: 237px;
    margin-left: 2px;
}

/* Workspace */
.workspace {
    height: 1087px;
    flex: none;
    display: flex;
}

.left-pane {
    width: 235px;
    flex: none;
    display: flex;
    flex-direction: column;
    background: #fff;
}

.tabs {
    height: 40px;
    display: flex;
    align-items: center;
    position: relative;
    padding: 3px 13px 0 20px;
    background: #c9dcf9;
}

.tab-shapes {
    position: absolute;
    left: 0;
    top: 0;
}

.tab-outline,
.tab-slides,
.tab-close {
    position: relative;
}

.tab-outline {
    width: 88px;
}

.tab-slides {
    font-weight: bold;
}

.tab-close {
    margin: 0 0 6px auto;
}

.thumb-row {
    display: flex;
    padding: 14px 0 0 12px;
}

.thumb-row b {
    width: 32px;
    padding-top: 10px;
}

.thumb {
    width: 173px;
    height: 130px;
    border: 2px solid #000;
}

.thumb p {
    margin: 14px 0 0;
    text-align: center;
    font: bold 10.500px/11.500px "Liberation Sans", sans-serif;
    letter-spacing: -0.2px;
}

.thumb-row.second b {
    width: 23px;
    padding-top: 19px;
}

.thumb-selected {
    padding: 4px;
    border: 6px solid #868686;
}

.thumb-selected .thumb {
    width: 172px;
    height: 129px;
}

.view-bar {
    height: 30px;
    display: flex;
    margin-top: auto;
    background: #c4daf8;
}

.view {
    width: 30px;
    display: flex;
    align-items: center;
    justify-content: center;
}

.view.on {
    width: 29px;
    border: 2px solid #10108a;
    background: #fdbb68;
}

.hscroll {
    width: 146px;
    display: flex;
    justify-content: space-between;
    padding: 2px 1px;
    background: #f3f2ec;
    margin-left: auto;
}

.dis-btn {
    width: 27px;
    height: 27px;
    display: flex;
    align-items: center;
    justify-content: center;
    border: 2px solid #fff;
    border-radius: 4px;
    background: #ecebe2;
}

.center {
    width: 1276px;
    flex: none;
    margin-left: 9px;
    display: flex;
    flex-direction: column;
    border-left: 2px solid #7090c8;
    box-shadow: -9px 0 0 #dbe8fd;
    padding-right: 5px;
}

.stage {
    height: 1006px;
    display: flex;
}

.canvas {
    width: 1238px;
    padding: 64px 0 0 34px;
    background: #979cb2;
}

.slide {
    width: 1168px;
    height: 878px;
    padding: 270px 0 0 86px;
    border: 2px solid #000;
    background: #fdfffe;
    box-shadow: 8px 8px 0 #000;
}

.placeholder {
    --h: repeating-linear-gradient(90deg, #777 0 3.700px, transparent 3.700px 7.400px);
    --v: repeating-linear-gradient(#777 0 3.700px, transparent 3.700px 7.400px);
    background: var(--h) top / 100% 2px no-repeat, var(--h) bottom / 100% 2px no-repeat, var(--v) left / 2px 100% no-repeat, var(--v) right / 2px 100% no-repeat;
    font-family: "Liberation Sans", Arial, sans-serif;
    text-align: center;
    letter-spacing: 0;
}

.ph-title {
    width: 992px;
    height: 190px;
    font-size: 71.500px;
    line-height: 194px;
}

.ph-sub {
    width: 818px;
    height: 225px;
    margin: 34px 0 0 87px;
    padding-top: 11px;
    font-size: 52px;
    line-height: 60px;
}

.vscroll {
    width: 30px;
    display: flex;
    flex-direction: column;
    align-items: center;
    background: linear-gradient(90deg, #f0f0ea, #fdfdf8);
}

.sb-btn {
    width: 28px;
    height: 29px;
    flex: none;
    display: flex;
    align-items: center;
    justify-content: center;
    border: 2px solid #fff;
    border-radius: 5px;
    background: linear-gradient(135deg, #d3e0fd, #b4c8f6);
    box-shadow: inset 0 -1px 0 #8ea8dc;
}

.sb-thumb {
    width: 28px;
    flex: none;
    display: flex;
    align-items: center;
    justify-content: center;
    border: 2px solid #fff;
    border-radius: 4px;
    background: linear-gradient(90deg, #cbd8fd, #c3d0fb 70%, #afc3f5);
    box-shadow: inset 0 -1px 0 #8ea8dc;
}

.sb-thumb i {
    width: 12px;
    height: 14px;
    background: repeating-linear-gradient(#eef4ff 0 2px, #8eaaf0 2px 4px);
}

.sb-space {
    flex: 1;
}

.vscroll .sb-thumb {
    height: 428px;
}

.jump {
    width: 30px;
    height: 63px;
    flex: none;
    display: flex;
    align-items: center;
    justify-content: center;
    padding-top: 7px;
    background: #c3d9fa;
    border-bottom: 2px solid #7c9fd8;
}

.corner {
    width: 30px;
    height: 27px;
    flex: none;
    background: #ece9d8;
}

.notes {
    height: 71px;
    display: flex;
    justify-content: space-between;
    margin-top: 10px;
    border-top: 2px solid #6d8cc8;
    background: #fefffe;
    box-shadow: 0 -10px 0 #dbe8fd;
}

.notes-text {
    padding: 9px 0 0 3px;
    font-size: 23px;
    letter-spacing: 0;
}

.notes-scroll {
    width: 30px;
    display: flex;
    flex-direction: column;
    justify-content: space-between;
    align-items: center;
    background: #f8f8f3;
}

/* Task pane */
.task-pane {
    width: 370px;
    height: 1077px;
    flex: none;
    margin-top: 6px;
    background: #e0ebfe;
    outline: 2px solid #cfe3fb;
}

.task-head {
    height: 46px;
    display: flex;
    align-items: center;
    padding: 3px 8px 0 4px;
    background: linear-gradient(#dcebff, #bdd3f8 55%, #7ba2e2);
}

.task-head b {
    margin-left: 7px;
    letter-spacing: 0.3px;
}

.task-drop {
    margin: -5px 16px 0 auto;
}

.task-nav {
    width: 160px;
    height: 35px;
    display: flex;
    align-items: center;
    justify-content: space-between;
    padding: 0 14px 0 12px;
    border-radius: 6px 0 10px 0;
    background: #4a7ace;
}

.task-nav i {
    width: 2px;
    height: 28px;
    background: #cfe0fb;
}

.task-label {
    display: block;
    height: 43px;
    padding-left: 10px;
    line-height: 54px;
    letter-spacing: 0.2px;
}

.layout-box {
    width: 348px;
    height: 901px;
    display: flex;
    justify-content: space-between;
    margin-left: 11px;
    padding: 2px;
    border: 2px solid #7f9db9;
    background: #fefffc;
}

.layout-list {
    width: 308px;
    height: 893px;
    overflow: hidden;
}

.layout-list h2 {
    height: 42px;
    margin: 0;
    padding-left: 8px;
    font-size: 20px;
    line-height: 46px;
    letter-spacing: 0.4px;
    white-space: nowrap;
    background: #bfd5f6;
}

.grid {
    display: grid;
    grid-template-columns: 134px 134px;
    grid-auto-rows: 100px;
    gap: 22.300px 20px;
    padding: 11px 0 0 8px;
    background: linear-gradient(90deg, transparent 151px, #bdbdbd 151px 153px, transparent 153px);
}

.two-rows {
    height: 245px;
}

.four-rows {
    height: 489px;
}

.last {
    height: 120px;
}

.card {
    width: 134px;
    height: 100px;
}

.card.selected {
    outline: 4px solid #3d6cc5;
    outline-offset: 3px;
}

.list-scroll {
    width: 28px;
    margin-right: 2px;
    display: flex;
    flex-direction: column;
    background: linear-gradient(90deg, #f1f1ec, #fefffa);
}

.list-scroll .sb-thumb {
    height: 374px;
    margin-top: 1px;
}

.check-row {
    display: flex;
    align-items: center;
    margin: 10px 0 0 11px;
}

.checkbox {
    width: 24px;
    height: 24px;
    border: 2px solid #1d5281;
    background: #fff;
}

.check-label {
    margin-left: 5px;
    white-space: nowrap;
}

/* Drawing toolbar and status bar */
.draw-row {
    height: 48px;
    flex: none;
    padding: 2px 0 0 6px;
}

.drawing {
    width: 1099px;
}

.draw-label {
    width: 48px;
    margin-left: 5px;
}

.draw-dd {
    margin-right: 4px;
}

.auto-label {
    width: 109px;
    margin-left: 5px;
    white-space: nowrap;
}

.auto-dd {
    margin-right: 2px;
}

.statusbar {
    height: 10px;
    flex: none;
    display: flex;
    background: linear-gradient(#b5aea4, #ebebdc 40%);
}

.st-1,
.st-2 {
    height: 4px;
    margin-top: 6px;
    border: 1px solid #d2d0be;
    border-bottom: 0;
}

.st-1 {
    width: 462px;
    margin-left: 8px;
}

.st-2 {
    width: 452px;
    margin: 6px 12px 0 8px;
}
```
